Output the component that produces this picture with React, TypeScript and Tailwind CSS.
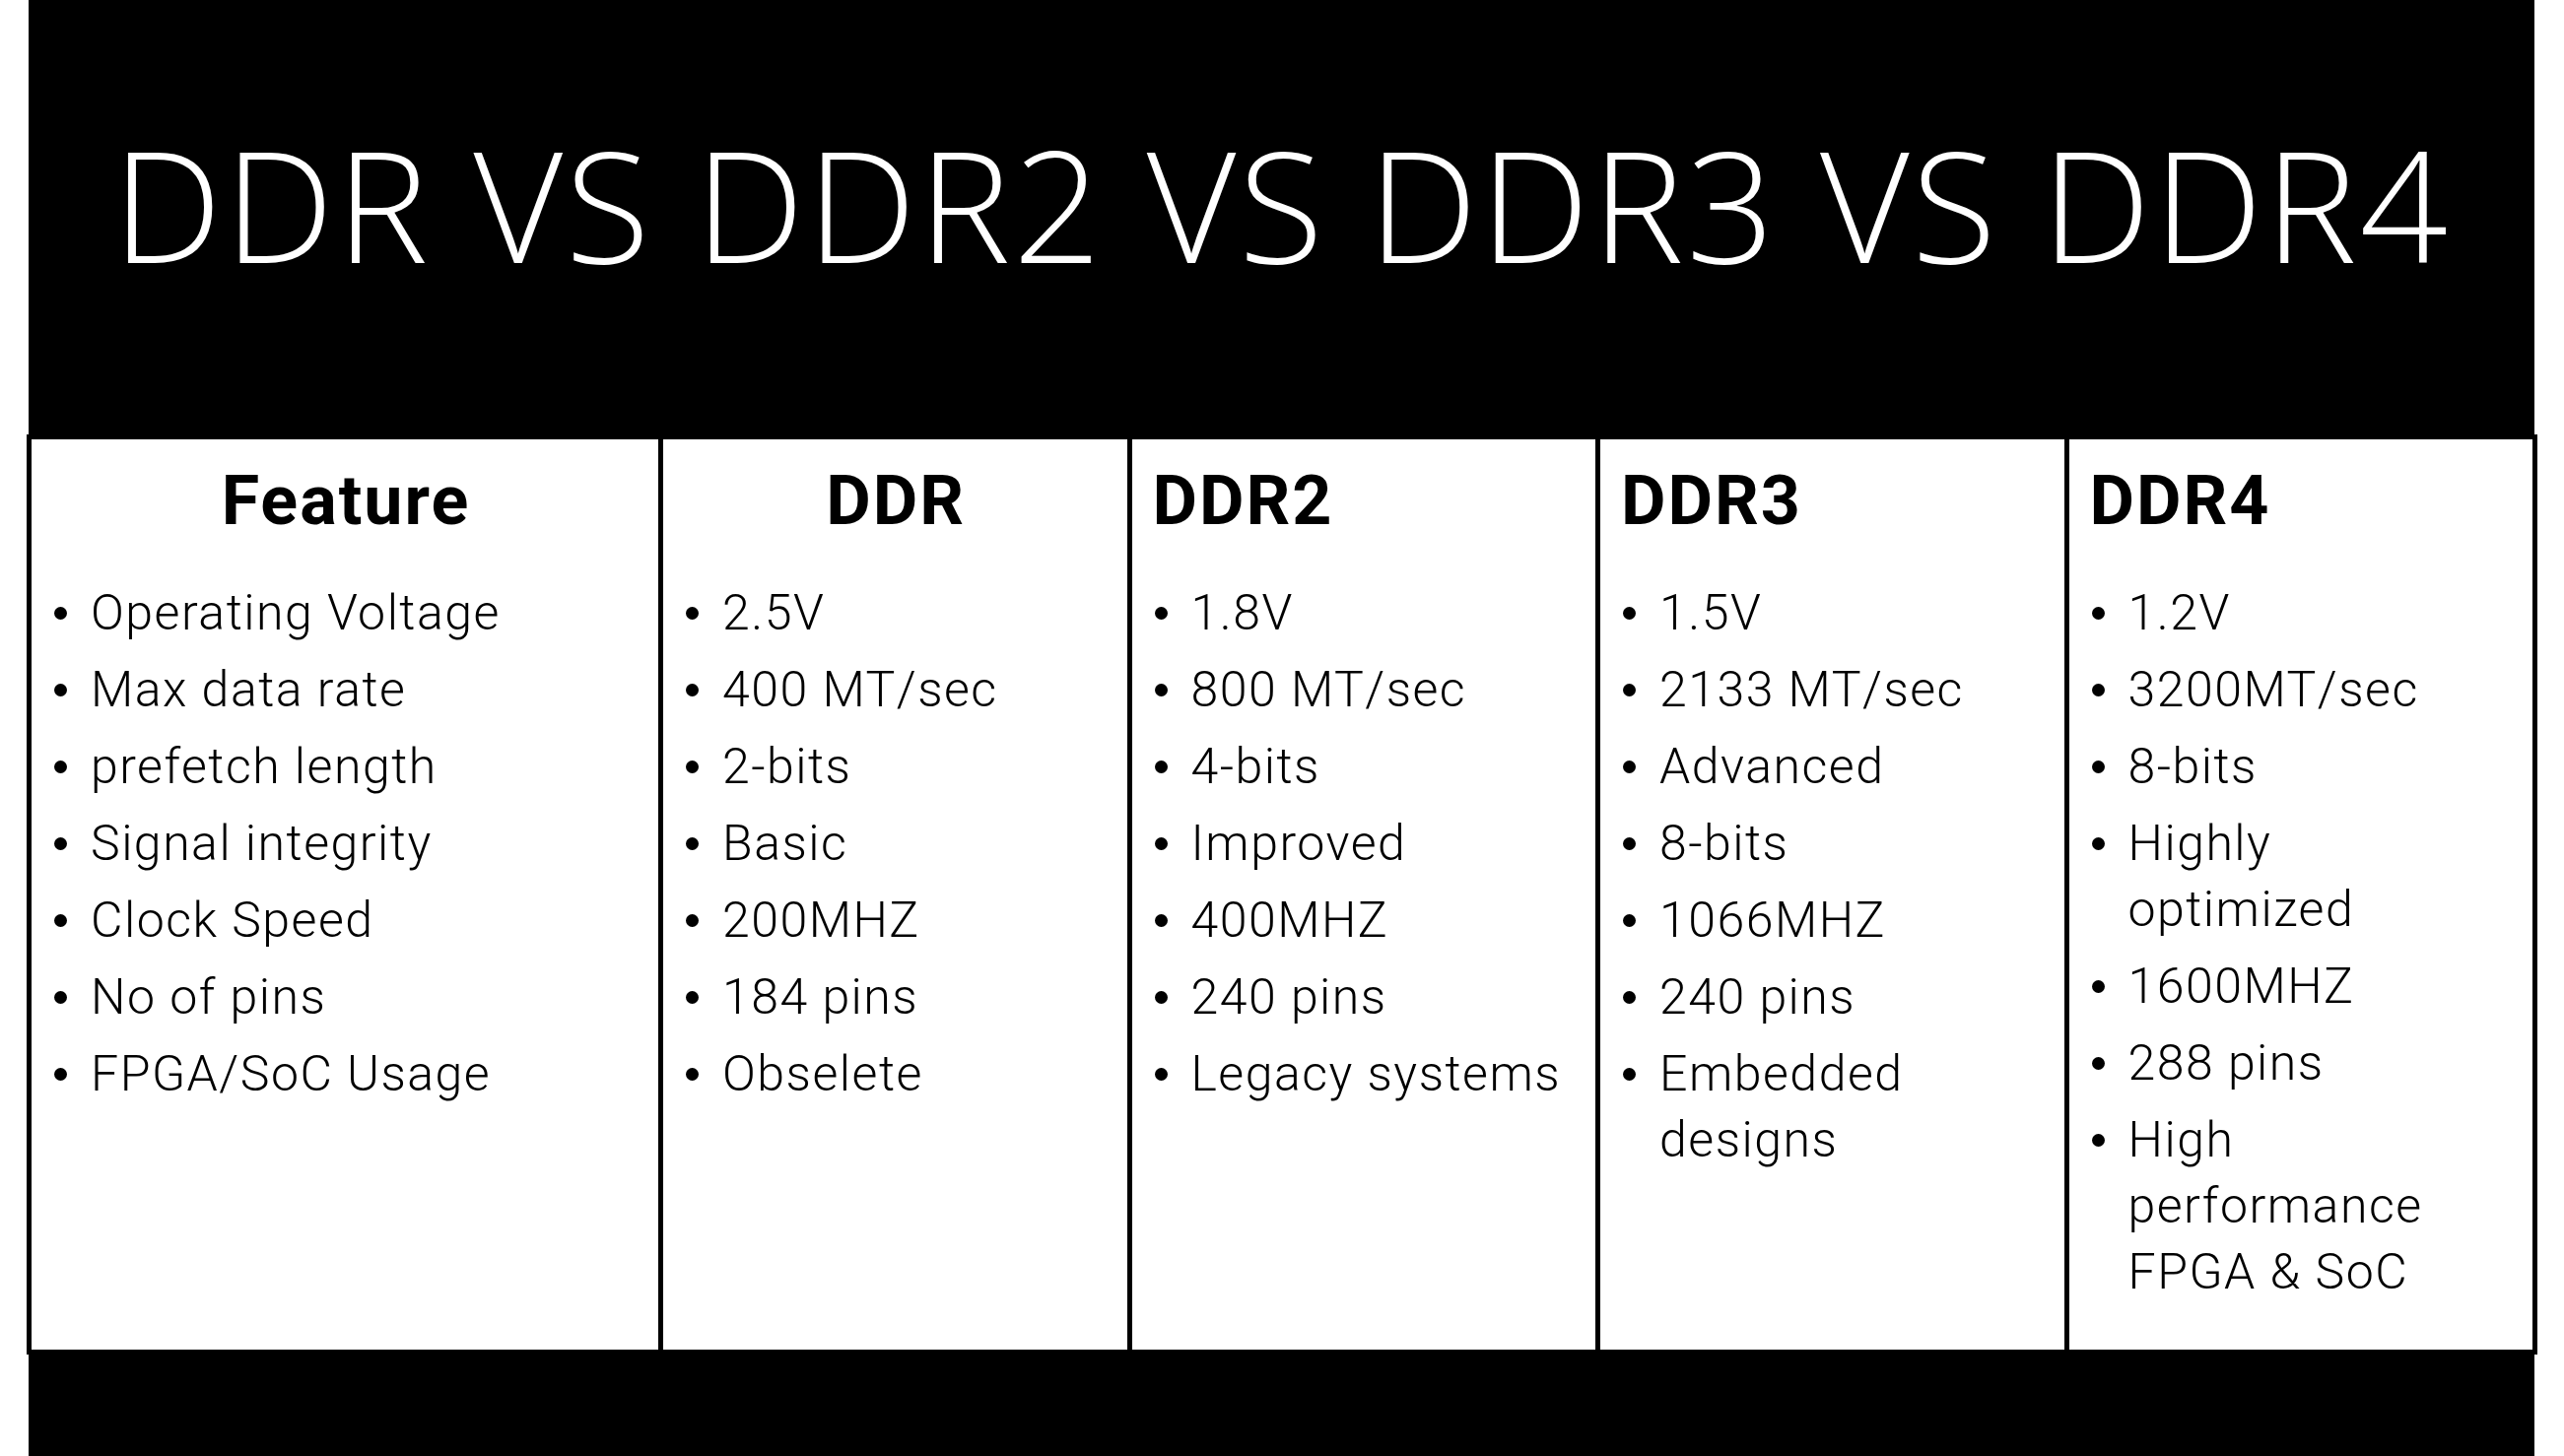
import React from "react";

type Col = {
  title: string;
  center?: boolean;
  wide?: boolean;
  items: string[][];
};

const cols: Col[] = [
  {
    title: "Feature",
    center: true,
    wide: true,
    items: [
      ["Operating Voltage"],
      ["Max data rate"],
      ["prefetch length"],
      ["Signal integrity"],
      ["Clock Speed"],
      ["No of pins"],
      ["FPGA/SoC Usage"],
    ],
  },
  {
    title: "DDR",
    center: true,
    items: [["2.5V"], ["400 MT/sec"], ["2-bits"], ["Basic"], ["200MHZ"], ["184 pins"], ["Obselete"]],
  },
  {
    title: "DDR2",
    items: [["1.8V"], ["800 MT/sec"], ["4-bits"], ["Improved"], ["400MHZ"], ["240 pins"], ["Legacy systems"]],
  },
  {
    title: "DDR3",
    items: [
      ["1.5V"],
      ["2133 MT/sec"],
      ["Advanced"],
      ["8-bits"],
      ["1066MHZ"],
      ["240 pins"],
      ["Embedded", "designs"],
    ],
  },
  {
    title: "DDR4",
    items: [
      ["1.2V"],
      ["3200MT/sec"],
      ["8-bits"],
      ["Highly", "optimized"],
      ["1600MHZ"],
      ["288 pins"],
      ["High", "performance", "FPGA & SoC"],
    ],
  },
];

function Cell({ col, first }: { col: Col; first: boolean }) {
  return (
    <div
      className={
        (col.wide ? "w-[636px] shrink-0 " : "flex-1 min-w-0 ") +
        (first ? "" : "border-l-[5px] border-black ") +
        "bg-white pt-[27px] pr-[12px]"
      }
    >
      <div
        className={
          "text-[70px] leading-none font-bold tracking-[2px] text-black " +
          (col.center ? "text-center pl-[14px]" : "pl-[21px]")
        }
        style={{ fontFamily: "Roboto, 'Liberation Sans', sans-serif" }}
      >
        {col.title}
      </div>
      <ul className="mt-[46px] flex flex-col gap-[11px] pl-[23px]">
        {col.items.map((lines, i) => (
          <li key={i} className="flex">
            <div className="w-[37px] h-[67px] shrink-0 flex items-center">
              <div className="w-[13px] h-[13px] rounded-full bg-black" />
            </div>
            <div
              className="flex-1 flex flex-col text-[50px] leading-[67px] font-light tracking-[1.5px] text-black"
              style={{ fontFamily: "Roboto, 'Liberation Sans', sans-serif" }}
            >
              {lines.map((l, j) => (
                <span key={j} className="whitespace-nowrap">
                  {l}
                </span>
              ))}
            </div>
          </li>
        ))}
      </ul>
    </div>
  );
}

export default function App() {
  return (
    <div className="w-[2602px] h-[1478px] bg-white overflow-hidden">
      <div className="ml-[29px] w-[2543px] h-[1478px] bg-black flex flex-col">
        <div
          className="pt-[128px] text-center text-white text-[157px] leading-none font-light tracking-[2.6px] whitespace-nowrap"
          style={{ fontFamily: "'Open Sans', 'Noto Sans', sans-serif" }}
        >
          DDR VS DDR2 VS DDR3 VS DDR4
        </div>
        <div className="mt-[156px] ml-[-2px] w-[2548px] h-[934px] border-[5px] border-black bg-white flex">
          {cols.map((c, i) => (
            <Cell key={c.title} col={c} first={i === 0} />
          ))}
        </div>
      </div>
    </div>
  );
}
